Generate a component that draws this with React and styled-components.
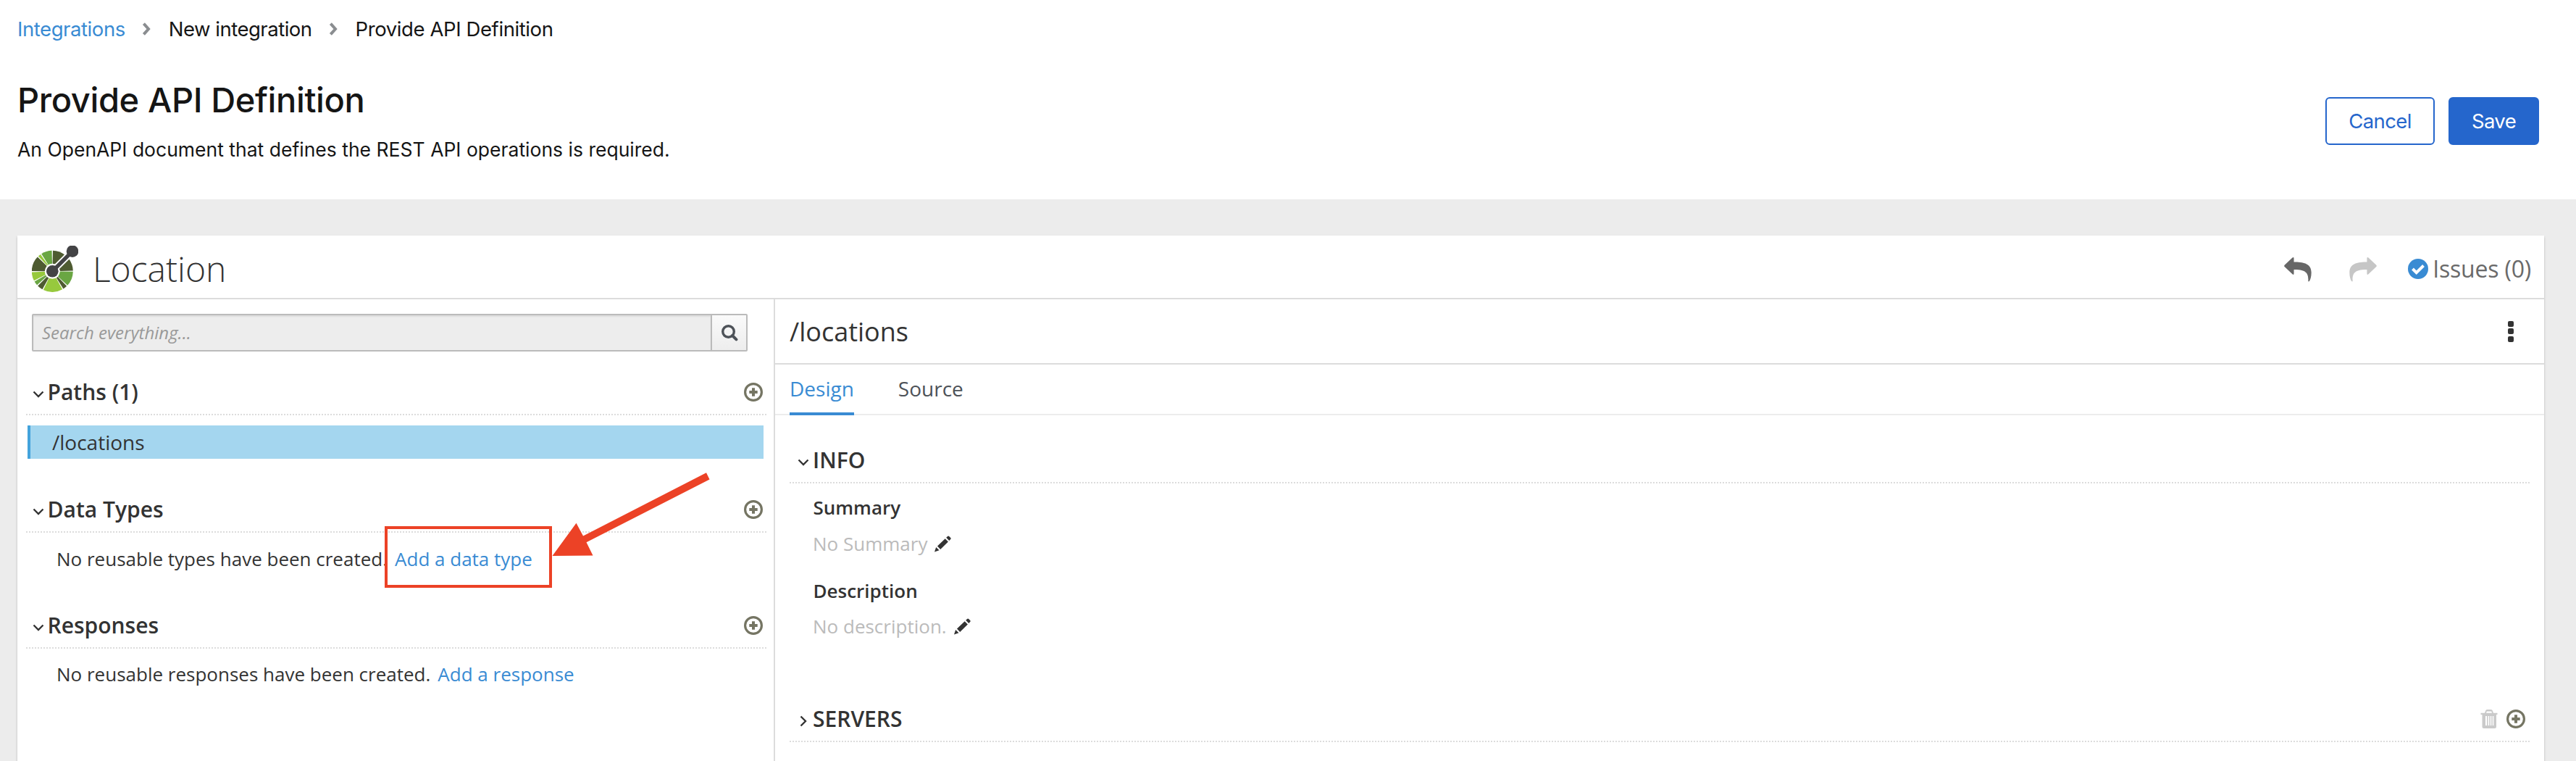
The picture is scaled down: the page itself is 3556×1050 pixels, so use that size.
import React from "react";
import styled, { createGlobalStyle } from "styled-components";

const Global = createGlobalStyle`
  *, *::before, *::after { box-sizing: border-box; }
  body { margin: 0; background: #ececec; }
  button { font: inherit; margin: 0; padding: 0; background: none; border: 0; }
  h1, h2, h3, p { margin: 0; font-weight: inherit; }
  a { text-decoration: none; color: #398bd3; }
  svg { display: block; flex: none; }
`;

const BODY = `"Open Sans", "Noto Sans", sans-serif`;
const BRAND = `Inter, "Liberation Sans", sans-serif`;

const Page = styled.div`
  position: relative;
  height: 1050px;
  overflow: hidden;
  white-space: nowrap;
  color: #333;
  font-family: ${BODY};
`;

const PageHeader = styled.header`
  display: flex;
  justify-content: space-between;
  height: 275px;
  padding: 20px 51px 0 24px;
  background: #fff;
  color: #151515;
  font-family: ${BRAND};
`;

const Breadcrumb = styled.nav`
  display: flex;
  align-items: center;
  height: 40px;
  font-size: 27.5px;
  line-height: 40px;
`;

const Crumb = styled.span`
  letter-spacing: ${(p) => p.$track}px;
  color: ${(p) => (p.$link ? "#398bd3" : "inherit")};
`;

const CrumbArrow = styled.svg`
  margin: 0 24.5px 0 23.5px;
`;

const Title = styled.h1`
  margin-top: 48px;
  font-size: 47px;
  font-weight: 500;
  line-height: 60px;
  letter-spacing: -0.38px;
`;

const Subtitle = styled.p`
  margin-top: 18px;
  font-size: 26.5px;
  line-height: 40px;
  letter-spacing: 0.01px;
`;

const Actions = styled.div`
  display: flex;
  gap: 19px;
  padding-top: 114px;
`;

const Button = styled.button`
  width: ${(p) => p.$width}px;
  height: 66px;
  border: 2px solid #2566cc;
  border-radius: 6px;
  background: ${(p) => (p.$primary ? "#2566cc" : "#fff")};
  color: ${(p) => (p.$primary ? "#fff" : "#2566cc")};
  font-size: 27.5px;
  letter-spacing: -0.6px;
`;

const Panel = styled.main`
  display: flex;
  flex-direction: column;
  height: 800px;
  margin: 50px 44px 0 24px;
  background: #fff;
  box-shadow: 0 2px 3px rgba(3, 3, 3, 0.22);
`;

const PanelHeader = styled.div`
  display: flex;
  align-items: center;
  height: 88px;
  padding: 6px 18px 0 20px;
  border-bottom: 2px solid #dcdcdc;
`;

const DocName = styled.h2`
  flex: 1;
  margin-left: 20px;
  font-size: 48px;
  font-weight: 300;
  line-height: 80px;
`;

const Tool = styled.button`
  margin-right: ${(p) => p.$gap}px;
  color: ${(p) => (p.$disabled ? "#c6c6c6" : "#676767")};
`;

const Issues = styled.div`
  display: flex;
  align-items: center;
  gap: 6px;
  color: #6a6a6a;
  font-size: 32px;
  line-height: 40px;
  letter-spacing: -0.2px;
`;

const Columns = styled.div`
  display: flex;
  flex: 1;
`;

const Sidebar = styled.aside`
  width: 1046px;
  padding: 20px 10px 0 12px;
  border-right: 2px solid #dcdcdc;
`;

const Search = styled.div`
  display: flex;
  width: 988px;
  height: 52px;
  margin: 0 0 28px 8px;
  border: 2px solid #bbb;
  border-radius: 2px;
`;

const SearchField = styled.div`
  flex: 1;
  padding-left: 12px;
  background: #ededed;
  box-shadow: inset 0 2px 2px rgba(3, 3, 3, 0.075);
  color: #999;
  font-size: 24px;
  font-style: italic;
  line-height: 48px;
`;

const SearchButton = styled.button`
  display: flex;
  align-items: center;
  justify-content: center;
  width: 49px;
  border-left: 2px solid #bbb;
  background: linear-gradient(#fafafa, #ededed);
`;

const SectionHeading = styled.div`
  display: flex;
  align-items: center;
  height: 60px;
  padding: 0 ${(p) => p.$right}px 5px ${(p) => p.$left}px;
  background: repeating-linear-gradient(90deg, #dcdcdc 0 2px, #fff 2px 4px) left bottom / 100% 2px no-repeat;
`;

const Caret = styled.span`
  display: flex;
  justify-content: center;
  width: 16px;
  padding-top: 6px;
  margin-right: ${(p) => p.$gap}px;
`;

const SectionTitle = styled.h3`
  flex: 1;
  font-size: 30px;
  font-weight: 600;
  line-height: 54px;
`;

const IconGroup = styled.div`
  display: flex;
  align-items: center;
  gap: 12px;
`;

const PathItem = styled.div`
  height: 46px;
  margin: 14px 4px 42px 2px;
  padding-left: 30px;
  border-left: 4px solid #43a3dc;
  background: #a4d6ef;
  font-size: 28px;
  line-height: 46px;
`;

const EmptyNote = styled.p`
  display: flex;
  gap: 10px;
  height: 36px;
  margin: ${(p) => p.$top}px 0 46px 42px;
  font-size: 26px;
  line-height: 36px;
`;

const Detail = styled.section`
  flex: 1;
`;

const DetailTitle = styled.div`
  display: flex;
  align-items: center;
  justify-content: space-between;
  height: 90px;
  padding: 0 42px 0 20px;
  border-bottom: 2px solid #dcdcdc;
  font-size: 36px;
`;

const Kebab = styled.span`
  display: grid;
  gap: 2.5px;
  i {
    width: 8px;
    height: 8px;
    border-radius: 2px;
    background: #333;
  }
`;

const Tabs = styled.div`
  display: flex;
  gap: 61px;
  height: 70px;
  margin-bottom: 34px;
  padding-left: 20px;
  border-bottom: 2px solid #ececec;
`;

const Tab = styled.div`
  height: 70px;
  border-bottom: 4px solid ${(p) => (p.$active ? "#398bd3" : "transparent")};
  color: ${(p) => (p.$active ? "#398bd3" : "#4d5258")};
  font-size: 28px;
  line-height: 66px;
`;

const DetailBody = styled.div`
  padding: 0 20px;
`;

const FieldLabel = styled.div`
  margin: ${(p) => p.$top}px 0 0 32.5px;
  font-size: 26px;
  font-weight: 600;
  line-height: 36px;
`;

const FieldValue = styled.div`
  display: flex;
  align-items: center;
  gap: 10px;
  margin: ${(p) => p.$top}px 0 ${(p) => p.$bottom || 0}px 32px;
  color: #bbb;
  font-size: 26px;
  line-height: 36px;
`;

const Highlight = styled.div`
  position: absolute;
  left: 531px;
  top: 726px;
  width: 231px;
  height: 85px;
  border: 4px solid #ec4226;
`;

const Pointer = styled.svg`
  position: absolute;
  left: 760px;
  top: 650px;
`;

function ChevronGray() {
  return (
    <CrumbArrow width="12" height="20" viewBox="0 0 12 20">
      <path d="M2.400 2.600 9 10l-6.600 7.400" fill="none" stroke="#8a8d90" strokeWidth="4" />
    </CrumbArrow>
  );
}

function CaretDown() {
  return (
    <svg width="16" height="10" viewBox="0 0 16 10">
      <path d="M1.500 1.500 8 8l6.500-6.500" fill="none" stroke="#333" strokeWidth="2.400" />
    </svg>
  );
}

function CaretRight() {
  return (
    <svg width="10" height="16" viewBox="0 0 10 16">
      <path d="M1.500 1.500 8 8l-6.500 6.500" fill="none" stroke="#333" strokeWidth="2.400" />
    </svg>
  );
}

function AddIcon() {
  return (
    <svg width="26" height="26" viewBox="0 0 26 26">
      <circle cx="13" cy="13" r="11.400" fill="none" stroke="#757563" strokeWidth="3.200" />
      <path d="M13 7.300v11.400M7.300 13h11.400" stroke="#757563" strokeWidth="4" />
    </svg>
  );
}

function TrashIcon() {
  return (
    <svg width="24" height="26" viewBox="0 0 24 26">
      <path
        fill="#cacaca"
        fillRule="evenodd"
        d="M0.500 4.800H6L7.200 1.500Q7.700 0 9.200 0h5.600q1.500 0 2 1.500L18 4.800h5.500v2.300H22V23.500q0 2.500-2.500 2.500h-14.500Q2.500 26 2.500 23.500V7.100H0.500ZM8 4.800h8l-.8-2.300H8.800ZM7 9v13h2V9Zm3.500 0v13h1.800V9Zm3.300 0v13h1.500V9Zm3 0v13h1.500V9Z"
      />
    </svg>
  );
}

function PencilIcon() {
  return (
    <svg width="23" height="23" viewBox="0 0 23 23">
      <path
        fill="#333"
        d="M0 22.500 2.200 16l4.300 4.200ZM4 14.600 14.700 4.200l4.200 4.200L8.200 18.900ZM16.200 2.800l1.900-1.900q1-1 2.100 0l2 2q1 1 0 2.100l-1.900 1.900Z"
      />
    </svg>
  );
}

function ReplyIcon({ flip }) {
  return (
    <svg width="38" height="35" viewBox="159 762 115 105">
      <path
        transform={flip ? "translate(433 0) scale(-1 1)" : undefined}
        fill="currentColor"
        d="M161 797 194 766Q200 762 200 769V784C244 783 273 793 273 828 273 845 269 858 265 864 262 867 259 866 260 862 261 832 252 815 200 816V833Q200 840 194 835L161 804Q158 801 161 797Z"
      />
    </svg>
  );
}

function CheckIcon() {
  return (
    <svg width="28" height="28" viewBox="0 0 28 28">
      <circle cx="14" cy="14" r="14" fill="#398bd3" />
      <path d="m6.500 14 5.200 5.200L21.500 9.500" fill="none" stroke="#fff" strokeWidth="4" />
    </svg>
  );
}

function SearchIcon() {
  return (
    <svg width="24" height="24" viewBox="0 0 24 24">
      <circle cx="10.500" cy="10.500" r="7.800" fill="none" stroke="#4d5258" strokeWidth="3.400" />
      <path d="m16 16 5.400 5.400" stroke="#4d5258" strokeWidth="4" strokeLinecap="round" />
    </svg>
  );
}

const DARK = "#4e5b31";
const GREEN = "#6aa643";
const LIME = "#97c93d";
const WEDGES = [
  [1.5, 36, DARK],
  [54, 88.5, DARK],
  [91, 133, GREEN],
  [136, 148, DARK],
  [151, 206, LIME],
  [209, 225, DARK],
  [228, 240, GREEN],
  [243, 267.5, LIME],
  [270.5, 314, DARK],
  [317, 325, LIME],
  [328, 358.5, GREEN],
];

function wedgePath(from, to) {
  const at = (deg, r) => {
    const a = (deg * Math.PI) / 180;
    return `${28.3 + r * Math.sin(a)} ${35.3 - r * Math.cos(a)}`;
  };
  return `M${at(from, 10.5)}L${at(from, 28.5)}A28.5 28.5 0 0 1 ${at(to, 28.5)}L${at(to, 10.5)}Z`;
}

function Logo() {
  return (
    <svg width="64" height="64" viewBox="0 0 64 64">
      {WEDGES.map(([from, to, fill]) => (
        <path key={from} d={wedgePath(from, to)} fill={fill} />
      ))}
      <circle cx="28.300" cy="35.300" r="10.500" fill="#fff" />
      <path d="M28.300 35.300 56 7.700" stroke="#fff" strokeWidth="9" />
      <path d="M28.300 35.300 56 7.700" stroke="#434345" strokeWidth="5.400" />
      <circle cx="28.300" cy="35.300" r="8.300" fill="#434345" />
      <circle cx="56" cy="7.700" r="8.300" fill="#434345" />
    </svg>
  );
}

function SideHeading({ title }) {
  return (
    <SectionHeading $left={8.5} $right={5.5}>
      <Caret $gap={5}>
        <CaretDown />
      </Caret>
      <SectionTitle>{title}</SectionTitle>
      <AddIcon />
    </SectionHeading>
  );
}

export default function App() {
  return (
    <Page>
      <Global />
      <PageHeader>
        <div>
          <Breadcrumb>
            <Crumb as="a" $link $track={-0.43}>Integrations</Crumb>
            <ChevronGray />
            <Crumb $track={-0.5}>New integration</Crumb>
            <ChevronGray />
            <Crumb $track={-0.4}>Provide API Definition</Crumb>
          </Breadcrumb>
          <Title>Provide API Definition</Title>
          <Subtitle>An OpenAPI document that defines the REST API operations is required.</Subtitle>
        </div>
        <Actions>
          <Button $width={151}>Cancel</Button>
          <Button $width={125} $primary>Save</Button>
        </Actions>
      </PageHeader>

      <Panel>
        <PanelHeader>
          <Logo />
          <DocName>Location</DocName>
          <Tool $gap={52}><ReplyIcon /></Tool>
          <Tool $gap={43} $disabled><ReplyIcon flip /></Tool>
          <Issues>
            <CheckIcon />
            <span>Issues (0)</span>
          </Issues>
        </PanelHeader>

        <Columns>
          <Sidebar>
            <Search>
              <SearchField>Search everything...</SearchField>
              <SearchButton><SearchIcon /></SearchButton>
            </Search>
            <SideHeading title="Paths (1)" />
            <PathItem>/locations</PathItem>
            <SideHeading title="Data Types" />
            <EmptyNote $top={18}>
              <span>No reusable types have been created.</span>
              <a>Add a data type</a>
            </EmptyNote>
            <SideHeading title="Responses" />
            <EmptyNote $top={17}>
              <span>No reusable responses have been created.</span>
              <a>Add a response</a>
            </EmptyNote>
          </Sidebar>

          <Detail>
            <DetailTitle>
              <span>/locations</span>
              <Kebab><i /><i /><i /></Kebab>
            </DetailTitle>
            <Tabs>
              <Tab $active>Design</Tab>
              <Tab>Source</Tab>
            </Tabs>
            <DetailBody>
              <SectionHeading $left={11} $right={6}>
                <Caret $gap={5}><CaretDown /></Caret>
                <SectionTitle>INFO</SectionTitle>
              </SectionHeading>
              <FieldLabel $top={15}>Summary</FieldLabel>
              <FieldValue $top={14}>
                <span>No Summary</span>
                <PencilIcon />
              </FieldValue>
              <FieldLabel $top={29}>Description</FieldLabel>
              <FieldValue $top={13} $bottom={82}>
                <span>No description.</span>
                <PencilIcon />
              </FieldValue>
              <SectionHeading $left={11} $right={6}>
                <Caret $gap={5}><CaretRight /></Caret>
                <SectionTitle>SERVERS</SectionTitle>
                <IconGroup>
                  <TrashIcon />
                  <AddIcon />
                </IconGroup>
              </SectionHeading>
            </DetailBody>
          </Detail>
        </Columns>
      </Panel>

      <Highlight />
      <Pointer width="222" height="120" viewBox="760 650 222 120">
        <path fill="#ec4226" d="M762.500 767 795.500 721.700 805 739.500 975 652.300 979.500 661.500 809.500 748.300 818.500 766.500Z" />
      </Pointer>
    </Page>
  );
}
